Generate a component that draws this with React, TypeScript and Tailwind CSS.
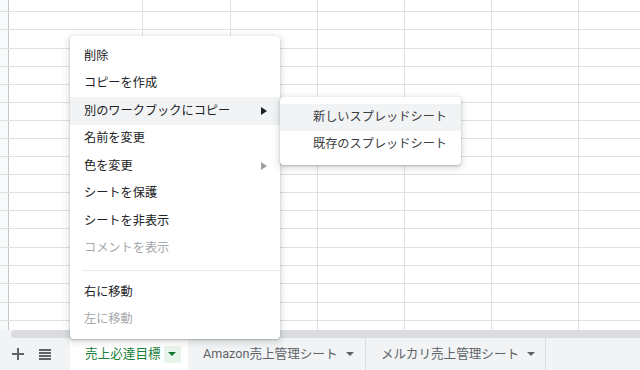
import React from 'react';

const font = "font-['Roboto','Noto_Sans_CJK_JP',sans-serif]";

// row heights measured from the grid lines (each includes its 1px bottom line)
const rowHeights = [
  'h-[12px]', 'h-[18px]', 'h-[19px]', 'h-[18px]', 'h-[18px]', 'h-[18px]', 'h-[18px]', 'h-[18px]',
  'h-[18px]', 'h-[18px]', 'h-[18px]', 'h-[18px]', 'h-[18px]', 'h-[19px]', 'h-[18px]', 'h-[18px]',
  'h-[19px]', 'h-[18px]', 'h-[10px]',
];

const colWidths = ['w-[134px]', 'w-[88px]', 'w-[87px]', 'w-[87px]', 'w-[87px]', 'w-[87px]', 'w-[87px]'];

type Item = { label: string; disabled?: boolean; sub?: boolean; active?: boolean };

const groupA: Item[] = [
  { label: '削除' },
  { label: 'コピーを作成' },
  { label: '別のワークブックにコピー', sub: true, active: true },
  { label: '名前を変更' },
  { label: '色を変更', sub: true },
  { label: 'シートを保護' },
  { label: 'シートを非表示' },
  { label: 'コメントを表示', disabled: true },
];

const groupB: Item[] = [
  { label: '右に移動' },
  { label: '左に移動', disabled: true },
];

const SubArrow = ({ dark }: { dark: boolean }) => (
  <svg width="6" height="8" viewBox="0 0 6 8" className="absolute right-[13px] top-1/2 -translate-y-1/2">
    <path d="M0 0 L6 4 L0 8 Z" fill={dark ? '#202124' : '#9aa0a6'} />
  </svg>
);

const Caret = ({ color }: { color: string }) => (
  <svg width="8" height="4" viewBox="0 0 8 4">
    <path d="M0 0 L8 0 L4 4 Z" fill={color} />
  </svg>
);

const MenuRow: React.FC<{ item: Item }> = ({ item }) => (
  <div
    className={`relative flex h-[27.5px] items-center pl-[14px] text-[12.2px] leading-none ${
      item.active ? 'bg-[#f1f3f4]' : ''
    } ${item.disabled ? 'text-[#a4a7ab]' : 'text-[#202124]'}`}
  >
    {item.label}
    {item.sub && <SubArrow dark={!!item.active} />}
  </div>
);

const App: React.FC = () => {
  return (
    <div className={`relative h-[370px] w-[640px] overflow-hidden bg-white ${font}`}>
      {/* Grid */}
      <div className="flex h-[330px] flex-col overflow-hidden">
        {rowHeights.map((h, r) => (
          <div key={r} className={`flex shrink-0 border-b border-[#dfe0e0] ${h}`}>
            <div className="w-[9px] shrink-0 border-r border-[#c4c7c5] bg-[#f8f9fa]" />
            {colWidths.map((w, c) => (
              <div key={c} className={`shrink-0 border-r border-[#dfe0e0] ${w}`} />
            ))}
          </div>
        ))}
      </div>

      {/* Horizontal scrollbar */}
      <div className="flex h-[8px] bg-[#f1f3f4]">
        <div className="ml-[11px] flex-1 rounded-l-[4px] bg-[#dadce0]" />
      </div>

      {/* Sheet tabs */}
      <div className="flex h-[32px] items-stretch bg-[#f1f3f4] text-[12.6px] leading-none">
        <div className="flex w-[70px] items-center">
          <svg width="12" height="12" viewBox="0 0 12 12" className="ml-[12px]">
            <path d="M5 0h2v5h5v2H7v5H5V7H0V5h5z" fill="#5f6368" />
          </svg>
          <svg width="12" height="11" viewBox="0 0 12 11" className="ml-[15px]">
            <path d="M0 0h12v2H0zM0 3h12v2H0zM0 6h12v2H0zM0 9h12v2H0z" fill="#5f6368" />
          </svg>
        </div>
        <div className="flex w-[118px] items-center bg-white pl-[15px] text-[#188038]">
          <span>売上必達目標</span>
          <span className="ml-[3px] flex h-[17px] w-[17px] items-center justify-center rounded-[2px] bg-[#e6f4ea]">
            <Caret color="#137333" />
          </span>
        </div>
        <div className="flex w-[178px] items-center border-r border-[#dadce0] pl-[15px] text-[#5f6368]">
          <span>Amazon売上管理シート</span>
          <span className="ml-[8px]">
            <Caret color="#5f6368" />
          </span>
        </div>
        <div className="flex w-[180px] items-center border-r border-[#dadce0] pl-[15px] text-[#5f6368]">
          <span>メルカリ売上管理シート</span>
          <span className="ml-[8px]">
            <Caret color="#5f6368" />
          </span>
        </div>
      </div>

      {/* Context menu */}
      <div className="absolute left-[70px] top-[36px] z-10 w-[210px] rounded-[4px] bg-white py-[6px] shadow-[0_2px_6px_2px_rgba(60,64,67,0.15),0_1px_2px_rgba(60,64,67,0.3)]">
        {groupA.map((item) => (
          <MenuRow key={item.label} item={item} />
        ))}
        <div className="flex h-[16px] items-center pl-[12px]">
          <div className="h-px flex-1 bg-[#e8eaed]" />
        </div>
        {groupB.map((item) => (
          <MenuRow key={item.label} item={item} />
        ))}
      </div>

      {/* Submenu */}
      <div className="absolute left-[280px] top-[97px] z-20 w-[181px] rounded-[4px] bg-white py-[7px] shadow-[0_2px_6px_2px_rgba(60,64,67,0.15),0_1px_2px_rgba(60,64,67,0.3)]">
        <div className="flex h-[27px] items-center bg-[#f1f3f4] pl-[33px] text-[12.2px] leading-none text-[#3c4043]">
          新しいスプレッドシート
        </div>
        <div className="flex h-[27px] items-center pl-[33px] text-[12.2px] leading-none text-[#3c4043]">
          既存のスプレッドシート
        </div>
      </div>
    </div>
  );
};

export default App;
